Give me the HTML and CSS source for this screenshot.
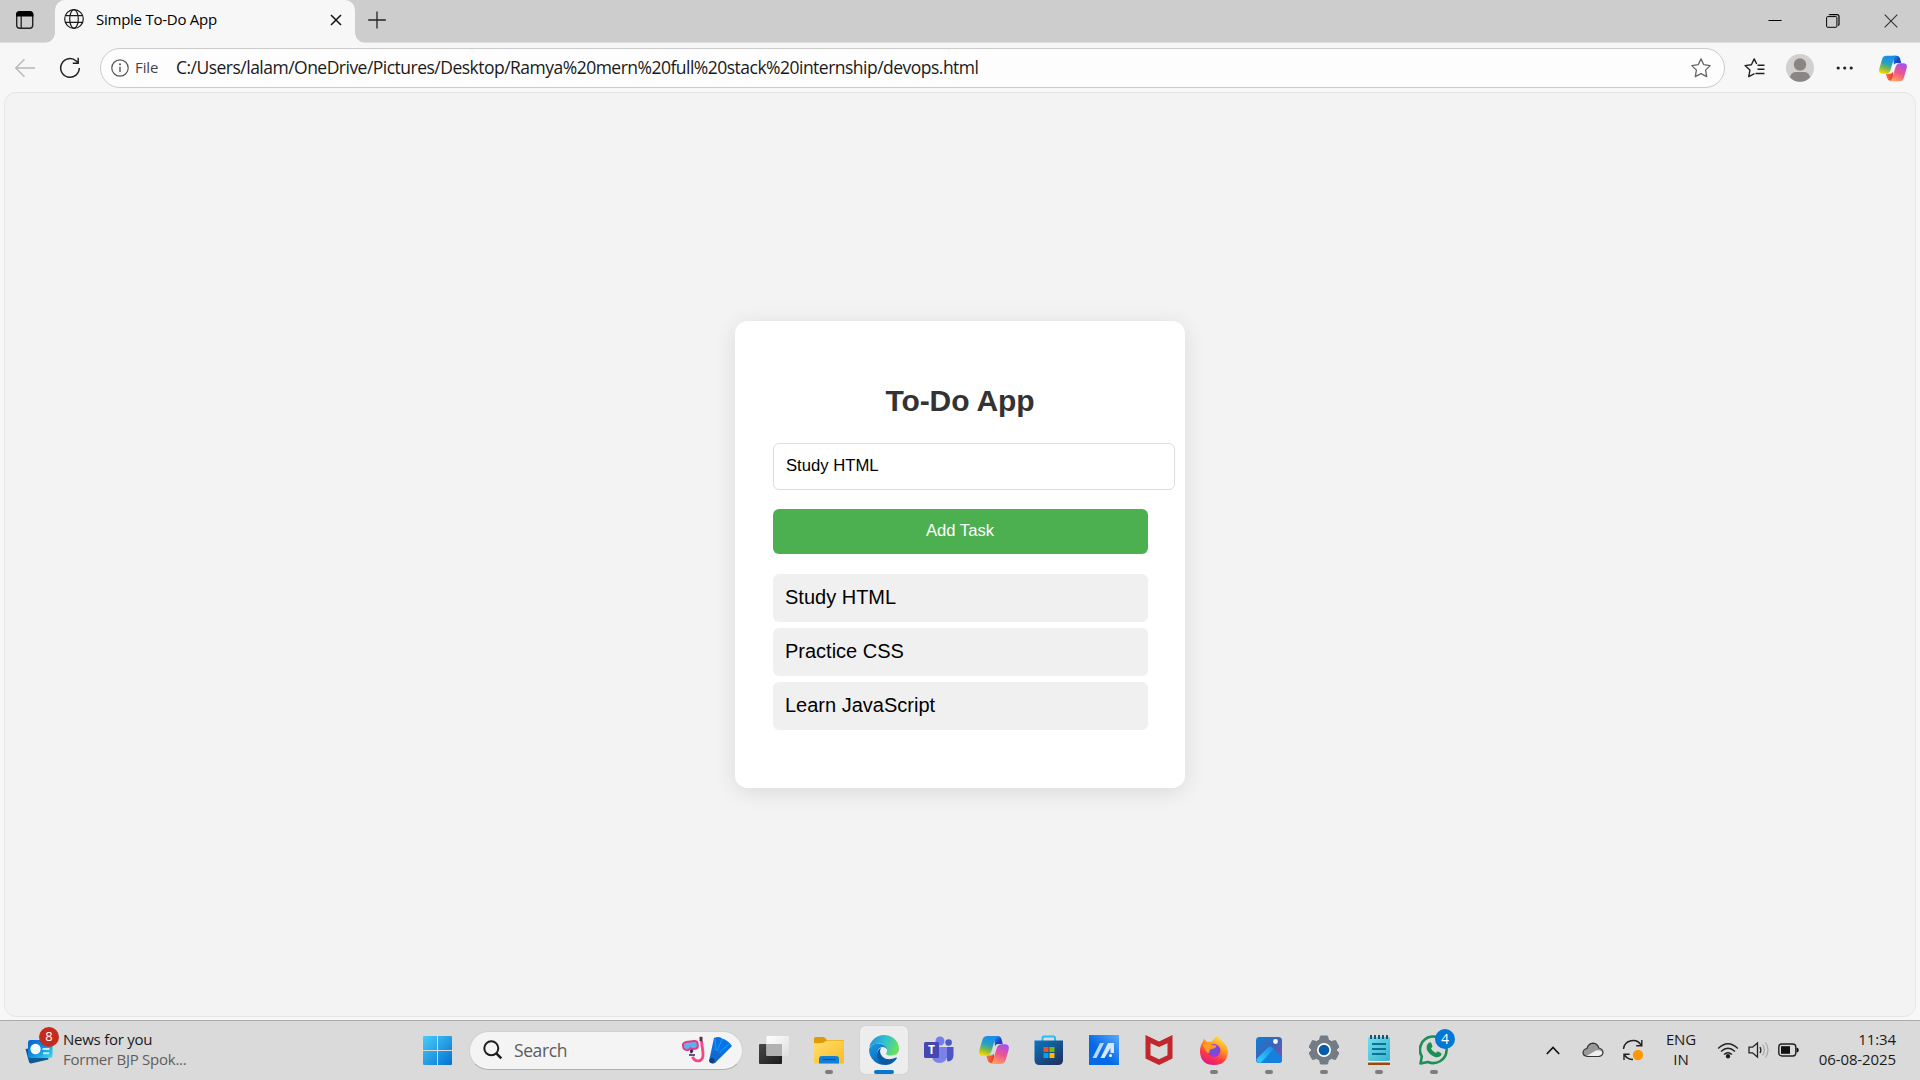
FILE: index.html
```html
<!DOCTYPE html>
<html lang="en">
<head>
<meta charset="utf-8">
<title>Simple To-Do App</title>
<link rel="stylesheet" href="styles.css">
</head>
<body>
<svg class="defs" width="0" height="0" aria-hidden="true">
  <defs>
    <linearGradient id="cpA" x1="0.6" y1="0" x2="0.3" y2="1"><stop offset="0.1" stop-color="#1b8fe8"/><stop offset=".45" stop-color="#28a3b8"/><stop offset=".7" stop-color="#7cb84a"/><stop offset="1" stop-color="#f8d800"/></linearGradient>
    <linearGradient id="cpB" x1="0.7" y1="0" x2="0.3" y2="1"><stop offset="0" stop-color="#a64ff0"/><stop offset=".5" stop-color="#f0558c"/><stop offset="1" stop-color="#ffa45c"/></linearGradient>
    <linearGradient id="cpC" x1="0" y1="0" x2="1" y2="1"><stop offset="0" stop-color="#1ba0ea"/><stop offset=".6" stop-color="#1c3fc4"/><stop offset="1" stop-color="#2257d8"/></linearGradient>
    <linearGradient id="cpD" x1="0" y1="0" x2="1" y2="0"><stop offset="0" stop-color="#f9783c"/><stop offset="1" stop-color="#e5402e"/></linearGradient>
    <symbol id="copilot" viewBox="0 0 30 28">
      <path d="M15 0h3.500q3 0 4 3l1.300 5H19q-2 0-3 2z" fill="url(#cpC)"/>
      <path d="M15 27h-3q-2.500 0-3.500-3l-1.200-4.500H12q2 0 3-2z" fill="url(#cpD)"/>
      <path d="M8.500 0H19q-2 .3-3 3.500L12.500 15q-1.300 4.700-5 4.700H4Q-.7 19.700.3 14.500L3.300 4Q4.500 0 8.500 0z" fill="url(#cpA)"/>
      <path d="M21.500 28H11q2-.3 3-3.500l3.500-11.500q1.300-4.700 5-4.700H26q4.700 0 3.700 5.200L26.700 24q-1.200 4-5.200 4z" fill="url(#cpB)"/>
    </symbol>
  </defs>
</svg>

<div class="desktop">
  <header class="tabstrip">
    <div class="workspaces">
      <svg width="20" height="20" viewBox="0 0 20 20"><rect x="1.700" y="2.200" width="16" height="16" rx="3" fill="none" stroke="#222" stroke-width="1.400"/><path d="M1 6.500V4.500Q1 1 4.500 1h10.400q3.500 0 3.500 3.500v2z" fill="#000"/><path d="M6.200 6v12" stroke="#222" stroke-width="1.300"/></svg>
    </div>
    <div class="tab">
      <svg width="20" height="20" viewBox="0 0 20 20" fill="none" stroke="#1b1b1b" stroke-width="1.200"><circle cx="10" cy="10" r="9.300"/><ellipse cx="10" cy="10" rx="4.300" ry="9.300"/><path d="M1.500 6.700h17M1.500 13.300h17"/></svg>
      <span class="tab-title">Simple To-Do App</span>
      <svg class="tab-close" width="12" height="12" viewBox="0 0 12 12"><path d="M1 1l10 10M11 1L1 11" stroke="#111" stroke-width="1.500"/></svg>
    </div>
    <svg class="new-tab" width="18" height="18" viewBox="0 0 18 18"><path d="M9 .5v17M.2 9h17.600" stroke="#222" stroke-width="1.300"/></svg>
    <div class="window-buttons">
      <svg width="14" height="14" viewBox="0 0 14 14"><path d="M.5 6.500h13" stroke="#000"/></svg>
      <svg width="14" height="14" viewBox="0 0 14 14" fill="none" stroke="#000"><rect x=".6" y="2.600" width="10.300" height="10.700" rx="1"/><path d="M3 1Q3.300.6 4.500.6H11q2 0 2 2v7.500q0 1-.8 1.500" stroke-width="1.200"/></svg>
      <svg width="14" height="14" viewBox="0 0 14 14"><path d="M.7.7l12.600 12.600M13.300.7L.7 13.300" stroke="#333" stroke-width="1.100"/></svg>
    </div>
  </header>

  <nav class="toolbar">
    <svg width="20" height="20" viewBox="0 0 20 20" fill="none" stroke="#b8b8b8" stroke-width="1.400"><path d="M20 10H.8M9.500 1.200L.8 10l8.700 8.800"/></svg>
    <svg class="reload" width="22" height="22" viewBox="0 0 22 22" fill="none" stroke="#222" stroke-width="1.500"><path d="M20.300 11A9.300 9.300 0 1 1 17.200 4L19 5.800M19.200.8v5.400h-5.400"/></svg>
    <div class="address">
      <svg width="18" height="18" viewBox="0 0 18 18"><circle cx="9" cy="9" r="8.200" fill="none" stroke="#555" stroke-width="1.200"/><path d="M9 7.700v5.300" stroke="#555" stroke-width="1.400"/><circle cx="9" cy="5.300" r="1" fill="#555"/></svg>
      <span class="scheme">File</span>
      <span class="url">C:/Users/lalam/OneDrive/Pictures/Desktop/Ramya%20mern%20full%20stack%20internship/devops.html</span>
      <svg class="fav" width="20" height="20" viewBox="0 0 20 20"><path d="M10 .9l2.800 5.800 6.400.9-4.600 4.500 1.100 6.600-5.700-3-5.700 3 1.100-6.600L.8 7.600l6.400-.9z" fill="none" stroke="#666" stroke-width="1.300" stroke-linejoin="round"/></svg>
    </div>
    <div class="tools">
      <svg width="21" height="20" viewBox="0 0 21 20" fill="none" stroke="#222" stroke-width="1.400" stroke-linejoin="round"><path d="M10.500 15.700l-5.700 3 1.100-6.600L1 7.600l6.400-.9L10.200.9 12.700 6M13.500 11.300h7M11.500 15.500h9M13.500 7.200h7"/></svg>
      <svg class="avatar" width="28" height="28" viewBox="0 0 28 28"><circle cx="14" cy="14" r="14" fill="#d2d0ce"/><circle cx="14" cy="10.500" r="6.200" fill="#8a8684"/><path d="M4 23.500q1-5.500 6-5.500h8q5 0 6 5.500A14 14 0 0 1 4 23.500z" fill="#8a8684"/></svg>
      <svg class="more" width="18" height="6" viewBox="0 0 18 6" fill="#222"><circle cx="2.200" cy="3" r="1.600"/><circle cx="8.700" cy="3" r="1.600"/><circle cx="15.200" cy="3" r="1.600"/></svg>
      <svg class="side-copilot" width="28" height="27" viewBox="0 0 30 28"><use href="#copilot"/></svg>
    </div>
  </nav>

  <div class="viewport">
    <main class="card">
      <h1>To-Do App</h1>
      <input class="task-input" type="text" value="Study HTML">
      <button class="add" type="button">Add Task</button>
      <ul class="tasks">
        <li>Study HTML</li>
        <li>Practice CSS</li>
        <li>Learn JavaScript</li>
      </ul>
    </main>
  </div>

  <footer class="taskbar">
    <div class="widget">
      <div class="widget-icon">
        <svg width="30" height="30" viewBox="0 0 30 30"><defs><linearGradient id="nw" x1="0" y1="0" x2="1" y2="1"><stop offset="0" stop-color="#0a5fd0"/><stop offset=".5" stop-color="#0b8fe0"/><stop offset="1" stop-color="#3fe0e8"/></linearGradient></defs><path d="M12 7l5-4v5z" fill="#35b558"/><path d="M.5 14l20-4 3 14.500L6 28.500q-1.500 0-2-1.500z" fill="#0d5a94"/><rect x="3" y="5" width="24.500" height="18" rx="2.500" fill="url(#nw)"/><circle cx="10.500" cy="14" r="5.200" fill="#f4f9fc"/><path d="M17.500 14h7M18 18.300h6" stroke="#b9ecff" stroke-width="2"/></svg>
        <span class="badge red">8</span>
      </div>
      <div class="widget-text"><span class="w1">News for you</span><span class="w2">Former BJP Spok...</span></div>
    </div>

    <svg class="start" width="29" height="29" viewBox="0 0 29 29"><defs><linearGradient id="win" x1="0" y1="0" x2="1" y2="1" gradientUnits="objectBoundingBox"><stop offset="0" stop-color="#49cdfb"/><stop offset="1" stop-color="#0570cf"/></linearGradient></defs><path d="M1 0h13v14H0V1Q0 0 1 0zM15 0h13q1 0 1 1v13H15zM0 15h14v14H1q-1 0-1-1zM15 15h14v13q0 1-1 1H15z" fill="url(#win)"/></svg>

    <div class="search">
      <svg width="20" height="20" viewBox="0 0 20 20" fill="none" stroke="#1d1d1d" stroke-width="2"><circle cx="8.300" cy="8.300" r="7"/><path d="M13.300 13.300l5 5" stroke-width="2.600"/></svg>
      <span class="search-label">Search</span>
      <svg class="dive" width="52" height="28" viewBox="0 0 52 28"><path d="M20.500 5l1.500 12q.5 7.500-4.500 7.800-4.500.2-6-4" fill="none" stroke="#f34788" stroke-width="2.800"/><path d="M20 .8v4.400" stroke="#59304f" stroke-width="3"/><path d="M2 8q1-1.500 3-2l8-1q3-.3 3.500 2l.3 2.500q.2 2.800-2.500 3.300l-3.300.2-1.500-1L7.500 14q-4 .5-5-2-.8-2.500-.5-4z" fill="#5fb0ee" stroke="#ea3980" stroke-width="2"/><path d="M9 14l2-1 1.500 2-1.500 2.200H9.200z" fill="#4a2852"/><path d="M8 19h6" stroke="#362052" stroke-width="1.500"/><path d="M33 2q5-2 8 .5 6 1.500 10 7.500L38 23l-4 4q-5 1.500-6-2z" fill="#0874e4"/><path d="M34 3l1 12M41 3l-6 15M48 8L36 19" stroke="#1b9bff" stroke-width="1"/><path d="M32 15q5-2 8 4l-6 8q-5 1.500-6-2z" fill="#1268cc"/><circle cx="31" cy="24.500" r="2.500" fill="#183d78"/></svg>
    </div>

    <div class="apps">
      <div class="app"><svg width="30" height="30" viewBox="0 0 30 30"><defs><linearGradient id="tv" x1="0" y1="0" x2="1" y2="1"><stop offset="0" stop-color="#474747"/><stop offset="1" stop-color="#1c1c1c"/></linearGradient><linearGradient id="tw" x1="0" y1="0" x2="1" y2="1"><stop offset="0" stop-color="#fff"/><stop offset="1" stop-color="#dedede"/></linearGradient></defs><rect y="9" width="23" height="20" rx="1" fill="url(#tv)"/><rect x="7.500" y="1" width="22.500" height="20" rx="1" fill="url(#tw)"/><path d="M7.500 9H23v12H8.500q-1 0-1-1z" fill="#b2b2b2"/></svg></div>
      <div class="app running"><svg width="30" height="30" viewBox="0 0 30 30"><defs><linearGradient id="fo" x1="0" y1="0" x2="1" y2="1"><stop offset="0" stop-color="#ffdf70"/><stop offset="1" stop-color="#fbbb20"/></linearGradient></defs><path d="M0 3.500Q0 2 1.500 2H10l3 3h16q1 0 1 1v5H0z" fill="#dc9c08"/><path d="M0 8q6 .5 9-.3L13 5.500h16q1 0 1 1V27q0 1.500-1.500 1.500h-27Q0 28.500 0 27z" fill="url(#fo)"/><path d="M5 28.500V24q0-3 3-3h14q3 0 3 3v4.500z" fill="#1380d8"/><path d="M8.500 24.500h13" stroke="#0b55a4" stroke-width="1.300"/></svg></div>
      <div class="app active"><svg width="30" height="30" viewBox="0 0 30 30"><defs><linearGradient id="e1" x1="0" y1=".2" x2="1" y2=".5"><stop offset="0" stop-color="#2691dc"/><stop offset=".5" stop-color="#31bfd0"/><stop offset="1" stop-color="#68e25b"/></linearGradient><linearGradient id="e2" x1="0" y1="0" x2=".5" y2="1"><stop offset="0" stop-color="#1b9de4"/><stop offset="1" stop-color="#0965bd"/></linearGradient></defs><path d="M.3 12.500A15 15 0 0 1 15 0q9 0 13.500 7.500Q30 11 30 14q-.3 6.500-7.500 6.500-5.500 0-5.500-2.300 1.500-1.500 1-4-1-5-8-5.700Q4 8.500.3 12.500z" fill="url(#e1)"/><path d="M.1 14Q2.500 8.500 9 8.500q8 .5 9.300 6-2-3-5-2.500Q8 13 8.500 19q1 7.500 9 10.600A15 15 0 0 1 .1 14z" fill="url(#e2)"/><path d="M12 12.800Q9.500 18 13.500 21.800q5 4.700 13.800.8.800 0 .5 1-4.500 6.800-11.800 6.300-7-1.700-8-9Q8 14.500 12 12.800z" fill="#0c59a4"/></svg></div>
      <div class="app"><svg width="30" height="30" viewBox="0 0 30 30"><circle cx="16" cy="6" r="4.500" fill="#747de9"/><circle cx="24.600" cy="7.500" r="3.300" fill="#4f58c8"/><path d="M20 12h9.500v8q0 6-6 6.500z" fill="#4c55c4"/><path d="M8 12h15v9q-.5 7-7.500 7T8 21z" fill="#7b83eb"/><rect y="7" width="15" height="16" rx="1.500" fill="#4448b0"/><text x="7.500" y="19" text-anchor="middle" class="teams-t">T</text></svg></div>
      <div class="app"><svg width="30" height="28" viewBox="0 0 30 28"><use href="#copilot"/></svg></div>
      <div class="app"><svg width="30" height="30" viewBox="0 0 30 30"><defs><linearGradient id="st" x1="0" y1="0" x2=".8" y2="1"><stop offset="0" stop-color="#0877c4"/><stop offset="1" stop-color="#20345f"/></linearGradient></defs><path d="M8.500 7V3q0-1.500 1.500-1.500h9.500Q21 1.500 21 3v4" fill="none" stroke="#27bdf2" stroke-width="2"/><path d="M.5 5.500H29V25q0 5-5 5H5.500q-5 0-5-5z" fill="url(#st)"/><path d="M9.500 12h5v5h-5z" fill="#f25022"/><path d="M15.500 12h5v5h-5z" fill="#7fba00"/><path d="M9.500 18h5v5h-5z" fill="#00a4ef"/><path d="M15.500 18h5v5h-5z" fill="#ffb900"/></svg></div>
      <div class="app"><svg width="30" height="30" viewBox="0 0 30 30"><defs><linearGradient id="ms" x1="0" y1="1" x2="1" y2="0"><stop offset=".4" stop-color="#0369e5"/><stop offset="1" stop-color="#5aa8fa"/></linearGradient></defs><path d="M0 0h30v30H0z" fill="url(#ms)"/><path d="M3.500 23L11 8h4L7.500 23z" fill="#b7d8fc"/><path d="M11.500 23L19 8h6v10h-3.500v-5L15.500 23z" fill="#d5e8fd"/><circle cx="21.500" cy="20.500" r="1.500" fill="#fff"/></svg></div>
      <div class="app"><svg width="28" height="30" viewBox="0 0 28 30"><path d="M.5 0L14 6.500 27.500 0v23.500L14 30 .5 23.500z" fill="#c1272d"/><path d="M5.500 8.300L14 12l8.500-3.700v11.900L14 24.300l-8.500-4.100z" fill="#dadada"/></svg></div>
      <div class="app running"><svg width="30" height="30" viewBox="0 0 30 30"><defs><linearGradient id="ff" x1=".8" y1="0" x2=".3" y2="1"><stop offset="0" stop-color="#fff03f"/><stop offset=".4" stop-color="#ff9a20"/><stop offset=".7" stop-color="#ff3b45"/><stop offset="1" stop-color="#e31587"/></linearGradient><radialGradient id="fp"><stop offset="0" stop-color="#6458d8"/><stop offset="1" stop-color="#9a38dc"/></radialGradient></defs><path d="M19 .5q1 3 4 5.500 6 5 6 11-1 13-14 13T1 17Q1 10 4 6.500l1-3L8 7l5-.5Q15 3 19 .5z" fill="url(#ff)"/><circle cx="15" cy="15.500" r="6.500" fill="url(#fp)"/><path d="M4 9.500L9 7.500l3.500 2.500 5 .5q-.5 3-5 3.500-3 1-2 4-3 0-5-4z" fill="#ff9d24"/></svg></div>
      <div class="app running"><svg width="28" height="28" viewBox="0 0 28 28"><defs><linearGradient id="ph" x1="0" y1="0" x2="1" y2="1"><stop offset="0" stop-color="#0c80d4"/><stop offset=".5" stop-color="#3c64bb"/><stop offset="1" stop-color="#8b4bb0"/></linearGradient><linearGradient id="pm" x1="0" y1="1" x2="1" y2="0"><stop offset="0" stop-color="#31d2fc"/><stop offset="1" stop-color="#1490e6"/></linearGradient></defs><rect x="1" y="1" width="26" height="26" rx="3.500" fill="url(#ph)"/><path d="M1.500 23L13 11.500q2-1.500 4 0L27 21.500v2q0 3.500-3.500 3.500H4q-2 0-2.500-4z" fill="#1680dd"/><path d="M1.500 23L13 11.500q2-1.500 4 0l1.500 1.500L6 26.800H4q-2 0-2.500-3.800z" fill="url(#pm)"/><circle cx="20.500" cy="5.500" r="2.400" fill="#fff"/></svg></div>
      <div class="app running"><svg width="30" height="30" viewBox="0 0 30 30"><path d="M11.500 1h7l1 4 3 1.500L26.500 5.500l3.500 6.500-3 3 3 3-3.500 6.500-4-1-3 1.500-1 4h-7l-1-4-3-1.500-4 1L0 18l3-3-3-3 3.500-6.500 4 1 3-1.500z" fill="#737b84" stroke="#737b84" stroke-linejoin="round"/><circle cx="15" cy="15" r="7" fill="#fff"/><circle cx="15" cy="15" r="5.300" fill="#075ba8"/></svg></div>
      <div class="app running"><svg width="30" height="30" viewBox="0 0 30 30"><defs><linearGradient id="np" x1="0" y1="0" x2="1" y2="1"><stop offset="0" stop-color="#74dded"/><stop offset="1" stop-color="#39b2cf"/></linearGradient></defs><path d="M4 24h22v6H4z" fill="#9a4b0b"/><path d="M4 24h22v3.500H4z" fill="#f5f5f5"/><rect x="4" y="2" width="22" height="24" rx="1.500" fill="url(#np)"/><path d="M7 0v4M11 0v4M15 0v4M19 0v4M23 0v4" stroke="#125a72" stroke-width="2"/><path d="M8 9h14M8 14h14M8 19h14" stroke="#087394" stroke-width="2"/></svg></div>
      <div class="app running"><svg width="30" height="30" viewBox="0 0 30 30"><path d="M2.800 21.500A13.300 13.300 0 1 1 9 27L1.500 28.500z" fill="none" stroke="#1b8f55" stroke-width="2.600" stroke-linejoin="round"/><path d="M9.500 8q2-1.500 3 .5l1 3-1.500 2q1.300 3 5 4.500l1.700-1.700 3.300 1.700q1 .7 0 2.500-2 2.500-6 1.500-5.500-2-8-7-1.300-4.500 1.500-7z" fill="#1b8f55"/></svg><span class="badge blue">4</span></div>
    </div>

    <div class="tray">
      <svg class="chev" width="14" height="9" viewBox="0 0 14 9"><path d="M.8 8L7 1.500 13.200 8" fill="none" stroke="#111" stroke-width="1.700"/></svg>
      <svg class="cloud" width="22" height="16" viewBox="0 0 22 16"><path d="M5.500 14.500Q1 14 1 10.500 1.500 7 5 6.500 6.500 1.500 11 1.200q4.500.2 5.800 4.800 4 .8 4.200 4.500-.3 3.500-4 4z" fill="#999"/><path d="M4.500 14l9.500-5.500q5-1 6.500 2-.5 3.200-4 3.400H6z" fill="#eee"/><path d="M5.500 14.500Q1 14 1 10.500 1.500 7 5 6.500 6.500 1.500 11 1.200q4.500.2 5.800 4.800 4 .8 4.200 4.500-.3 3.500-4 4z" fill="none" stroke="#333" stroke-width="1.200"/></svg>
      <svg class="sync" width="22" height="22" viewBox="0 0 22 22"><path d="M1.500 10A9.500 9.500 0 0 1 19.300 6.500M19.800 1v5.800h-5.600M2 21v-5.800h5.600M2.500 16q3 4.500 8.500 4.500" fill="none" stroke="#222" stroke-width="1.400"/><circle cx="16" cy="16" r="5.200" fill="#ff9800"/></svg>
      <div class="lang"><span>ENG</span><span>IN</span></div>
      <svg class="wifi" width="22" height="17" viewBox="0 0 22 17" fill="none" stroke="#222" stroke-width="1.400"><path d="M1.200 6.500Q11-3 20.800 6.500M4 9.500q7-6.300 14 0M7 12.500q4-3.500 8 0"/><circle cx="11" cy="14.300" r="1.500" fill="#111"/></svg>
      <svg class="vol" width="21" height="18" viewBox="0 0 21 18" fill="none" stroke="#222" stroke-width="1.300"><path d="M1 6.200h3.500L9.500 2v14l-5-4.200H1zM12 6q1.700 3 0 6"/><path d="M14.500 3.500q3.800 5.500 0 11M17.500 1.500q5 7.500 0 15" stroke="#aaa"/></svg>
      <svg width="21" height="14" viewBox="0 0 21 14"><rect x=".8" y="1" width="17" height="12" rx="3" fill="none" stroke="#222" stroke-width="1.400"/><rect x="3" y="3.200" width="9" height="7.600" fill="#111"/><path d="M18.500 4.500q2.300 0 2.300 2.500t-2.300 2.500z" fill="#111"/></svg>
      <div class="clock"><span>11:34</span><span>06-08-2025</span></div>
    </div>
  </footer>
</div>
</body>
</html>
```
FILE: styles.css
```css
* { box-sizing: border-box; }
body { margin: 0; overflow: hidden; font-family: "Open Sans", "Noto Sans", sans-serif; color: #1a1a1a; }
svg { display: block; flex: none; }
.defs { position: absolute; }
.desktop { width: 1920px; height: 1080px; display: flex; flex-direction: column; background: #f7f7f7; }

/* Tab strip */
.tabstrip { height: 43px; flex: none; display: flex; background: #cdcdcd; border-bottom: 1px solid #dedede; }
.workspaces { flex: none; width: 55px; padding: 10px 0 0 15px; }
.tab { position: relative; flex: none; width: 300px; height: 43px; padding: 0 13px 6px 9px; display: flex; align-items: center; background: #f7f7f7; border-radius: 10px 10px 0 0; }
.tab::before, .tab::after { content: ""; position: absolute; bottom: 0; width: 10px; height: 10px; }
.tab::before { right: 100%; background: radial-gradient(circle at 0 0, transparent 9.5px, #f7f7f7 10px); }
.tab::after { left: 100%; background: radial-gradient(circle at 100% 0, transparent 9.5px, #f7f7f7 10px); }
.tab-title { margin-left: 12px; font-size: 15px; line-height: 20px; color: #000; letter-spacing: -.25px; white-space: nowrap; }
.tab-close { margin: 2px 0 0 auto; }
.new-tab { margin: 11px 0 0 13px; }
.window-buttons { margin-left: auto; padding: 14px 22px 0 0; display: flex; gap: 44px; }

/* Toolbar */
.toolbar { height: 49px; flex: none; display: flex; align-items: center; padding: 1px 13px 0 15px; }
.reload { margin-left: 24px; }
.address { width: 1625px; height: 40px; margin-left: 19px; padding: 0 13px 0 10px; display: flex; align-items: center; background: #fdfdfd; border: 1px solid #cbcbcb; border-radius: 20px; }
.scheme { width: 41px; margin-left: 6px; padding-bottom: 2px; font-size: 15px; line-height: 20px; letter-spacing: -.1px; color: #444; }
.url { padding-bottom: 2px; font-size: 17.5px; line-height: 24px; letter-spacing: -.515px; white-space: nowrap; }
.fav { margin-left: auto; }
.tools { flex: 1; margin-left: 19px; display: flex; align-items: center; }
.avatar { margin-left: 21px; }
.more { margin-left: 22px; }
.side-copilot { margin-left: auto; }

/* Page */
.viewport { flex: 1; margin: 0 4px 3px; display: flex; align-items: center; justify-content: center; background: #f3f3f3; border: 1px solid #e6e6e6; border-radius: 12px; }
.card { width: 450px; height: 467px; padding: 62px 37.5px 0; background: #fff; border-radius: 12.5px; box-shadow: 0 4px 22px rgba(0, 0, 0, .1); font-family: "Liberation Sans", Arial, sans-serif; }
.card h1 { margin: 0 0 25px; font-size: 30px; line-height: 35px; letter-spacing: -.1px; text-align: center; color: #333; }
.task-input { display: block; width: 402px; height: 47px; padding: 0 12.5px 2px; border: 1px solid #ddd; border-radius: 6px; font: 16.67px/19px "Liberation Sans", Arial, sans-serif; color: #000; background: #fff; outline: 0; }
.add { display: block; width: 100%; height: 45px; margin-top: 19px; padding: 0 0 2px; border: 0; border-radius: 6px; background: #4caf50; color: #fff; font: 16.67px/19px "Liberation Sans", Arial, sans-serif; }
.tasks { margin: 20px 0 0; padding: 0; list-style: none; display: grid; gap: 6px; }
.tasks li { height: 48px; padding: 11.5px 12.5px; border-radius: 6px; background: #f0f0f0; font-size: 20px; line-height: 23px; color: #000; }

/* Taskbar */
.taskbar { height: 60px; flex: none; display: flex; align-items: center; padding-bottom: 1px; background: #dadada; border-top: 1px solid #acacac; }
.widget { width: 423px; padding-left: 25px; display: flex; align-items: center; gap: 8px; }
.widget-icon { position: relative; width: 30px; height: 30px; }
.badge { position: absolute; width: 20px; height: 20px; border-radius: 50%; text-align: center; font-size: 13px; line-height: 19px; color: #fff; }
.badge.red { left: 14px; top: -8px; background: #c42b1c; }
.badge.blue { left: 25px; top: 3px; font-size: 14px; background: #0078d4; }
.widget-text { display: grid; padding-bottom: 3px; font-size: 15px; line-height: 20px; letter-spacing: -.25px; white-space: nowrap; }
.w2 { color: #5e5e5e; }
.search { width: 274px; height: 39px; margin-left: 17px; padding: 0 9px 0 13px; display: flex; align-items: center; background: #f4f4f4; border: 1px solid #d0d0d0; border-bottom-color: #b0b0b0; border-radius: 20px; }
.search-label { margin-left: 11px; font-size: 17.5px; line-height: 24px; color: #5c5c5c; letter-spacing: -.4px; }
.dive { margin-left: auto; }
.apps { display: flex; margin-left: 7px; gap: 7px; }
.app { position: relative; width: 48px; height: 48px; display: flex; align-items: center; justify-content: center; border-radius: 5px; }
.app.active { background: #ededed; box-shadow: 0 0 1px #aaa; }
.app.running::after, .app.active::after { content: ""; position: absolute; left: 20px; bottom: 0; width: 8px; height: 4px; border-radius: 2px; background: #7d7d7d; }
.app.active::after { left: 14px; width: 20px; background: #0078d4; }
.teams-t { font: bold 12px "Open Sans", sans-serif; fill: #fff; }
.tray { flex: 1; margin-right: 24px; display: flex; align-items: center; justify-content: flex-end; font-size: 15px; line-height: 20px; letter-spacing: -.1px; }
.cloud { margin-left: 22px; }
.sync { margin-left: 18px; }
.lang { width: 40px; margin-left: 17px; padding-bottom: 2px; display: grid; text-align: center; }
.wifi { margin-left: 16px; }
.vol { margin: 0 9px; }
.clock { width: 97px; padding-bottom: 3px; display: grid; text-align: right; white-space: nowrap; }
```
